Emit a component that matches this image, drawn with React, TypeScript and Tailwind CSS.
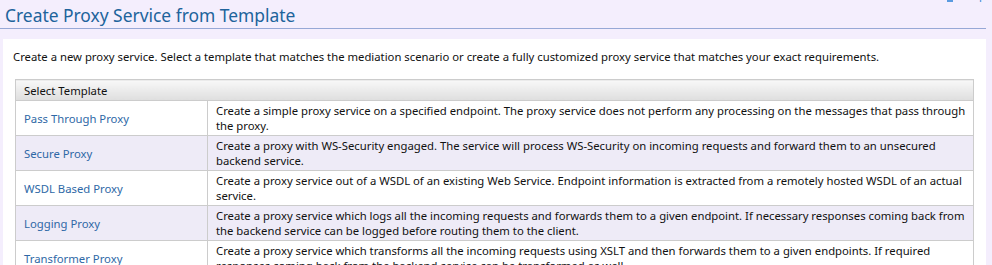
const templates = [
  {
    name: 'Pass Through Proxy',
    desc: 'Create a simple proxy service on a specified endpoint. The proxy service does not perform any processing on the messages that pass through the proxy.',
  },
  {
    name: 'Secure Proxy',
    desc: 'Create a proxy with WS-Security engaged. The service will process WS-Security on incoming requests and forward them to an unsecured backend service.',
  },
  {
    name: 'WSDL Based Proxy',
    desc: 'Create a proxy service out of a WSDL of an existing Web Service. Endpoint information is extracted from a remotely hosted WSDL of an actual service.',
  },
  {
    name: 'Logging Proxy',
    desc: 'Create a proxy service which logs all the incoming requests and forwards them to a given endpoint. If necessary responses coming back from the backend service can be logged before routing them to the client.',
  },
  {
    name: 'Transformer Proxy',
    desc: 'Create a proxy service which transforms all the incoming requests using XSLT and then forwards them to a given endpoints. If required responses coming back from the backend service can be transformed as well.',
  },
];

export default function App() {
  return (
    <div className="w-[992px] h-[265px] overflow-hidden bg-[#f4eefd] font-['Noto_Sans',sans-serif] text-[11.3px] text-[#111]">
      <div className="relative h-[39px]">
        <div className="absolute right-[6px] top-[-12px] flex items-center gap-[8px] text-[11.3px] leading-[14px] text-[#3b8ad6]">
          <span className="inline-block h-[14px] w-[6px] bg-[#5a9be0]" />
          <span>Help</span>
        </div>
        <h1 className="pl-[5px] pt-[4px] text-[17.4px] leading-[22px] text-[#20639b]">Create Proxy Service from Template</h1>
        <div className="mr-[6px] mt-[2px] h-px bg-[#97a8d6]" />
      </div>
      <div className="ml-[3px] mr-[6px] h-[226px] bg-white px-[12px] pt-[9px]">
        <p className="-ml-[2px] leading-[18px]">
          Create a new proxy service. Select a template that matches the mediation scenario or create a fully customized proxy service that matches your exact requirements.
        </p>
        <table className="mt-[13px] w-full border-collapse border border-[#cccccc] leading-[15px]">
          <thead>
            <tr>
              <th className="h-[21px] border border-[#cccccc] bg-gradient-to-b from-[#f8f8f8] to-[#dedede] pl-[8px] text-left font-normal" colSpan={2}>
                Select Template
              </th>
            </tr>
          </thead>
          <tbody>
            {templates.map((t, i) => (
              <tr key={t.name} className={i % 2 === 1 ? 'bg-[#eeebf7]' : 'bg-white'}>
                <td className="w-[192px] border border-[#cccccc] pl-[8px] align-middle">
                  <a href="#" className="text-[#2e68a6]">{t.name}</a>
                </td>
                <td className="h-[35px] border border-[#cccccc] pl-[8px] pr-[2px] py-[2px] align-top">{t.desc}</td>
              </tr>
            ))}
          </tbody>
        </table>
      </div>
    </div>
  );
}
